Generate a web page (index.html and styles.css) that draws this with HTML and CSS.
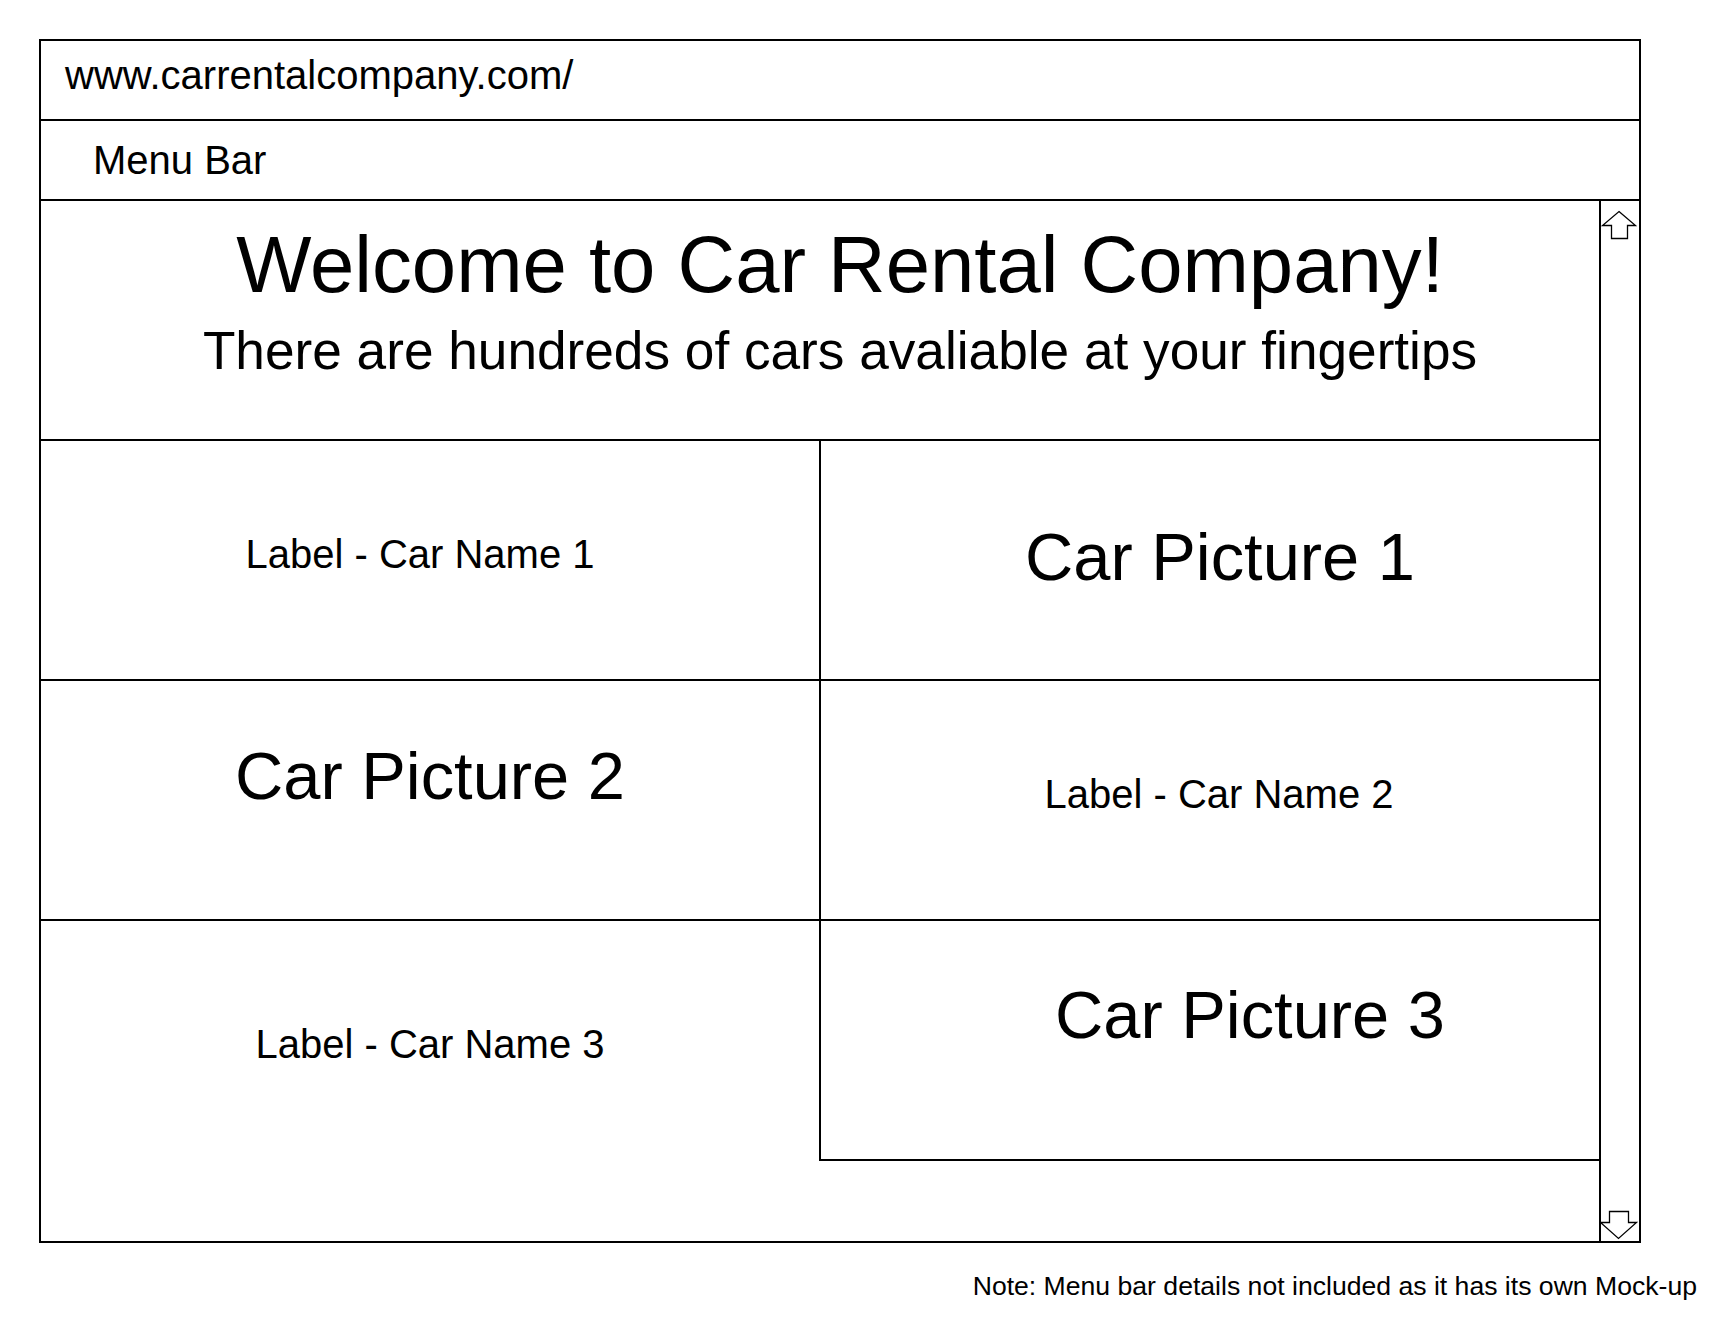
FILE: index.html
```html
<!DOCTYPE html>
<html lang="en">
<head>
<meta charset="utf-8">
<title>Car Rental Company - Mock-up</title>
<link rel="stylesheet" href="styles.css">
</head>
<body>
<div class="frame">
  <div class="urlbar">www.carrentalcompany.com/</div>
  <div class="menubar">Menu Bar</div>
  <div class="viewport">
    <div class="content">
      <div class="hero">
        <h1 class="hero-title">Welcome to Car Rental Company!</h1>
        <p class="hero-sub">There are hundreds of cars avaliable at your fingertips</p>
      </div>
      <div class="grid">
        <div class="cell cell-left"><span class="label label-1">Label - Car Name 1</span></div>
        <div class="cell"><span class="picture picture-1">Car Picture 1</span></div>
        <div class="cell cell-left"><span class="picture picture-2">Car Picture 2</span></div>
        <div class="cell"><span class="label label-2">Label - Car Name 2</span></div>
        <div class="cell cell-left cell-last"><span class="label label-3">Label - Car Name 3</span></div>
        <div class="cell cell-last-right"><span class="picture picture-3">Car Picture 3</span></div>
      </div>
    </div>
    <div class="scrollbar">
      <svg class="arrow arrow-up" width="40" height="40" viewBox="0 0 40 40">
        <polygon points="20,10.5 36.5,24.5 28.5,24.5 28.5,37.5 12.5,37.5 12.5,24.5 3.5,24.5" fill="#fff" stroke="#000" stroke-width="1.3"/>
      </svg>
      <svg class="arrow arrow-down" width="40" height="40" viewBox="0 0 40 40">
        <polygon points="10.5,10.5 29.5,10.5 29.5,21.5 37.5,21.5 19.5,37.5 1.5,21.5 10.5,21.5" fill="#fff" stroke="#000" stroke-width="1.3"/>
      </svg>
    </div>
  </div>
</div>
<div class="note-row">
  <p class="note">Note: Menu bar details not included as it has its own Mock-up</p>
</div>
</body>
</html>
```

FILE: styles.css
```css
html, body {
  margin: 0;
  padding: 0;
  background: #ffffff;
}

body {
  font-family: "Liberation Sans", Arial, sans-serif;
  color: #000000;
  width: 1720px;
}

.frame {
  box-sizing: border-box;
  margin: 39px 0 0 39px;
  width: 1602px;
  height: 1204px;
  border: 2px solid #000;
  display: flex;
  flex-direction: column;
}

.urlbar {
  box-sizing: border-box;
  height: 80px;
  border-bottom: 2px solid #000;
  padding-left: 24px;
  font-size: 40px;
  line-height: 46px;
  padding-top: 11px;
}

.menubar {
  box-sizing: border-box;
  height: 80px;
  border-bottom: 2px solid #000;
  padding-left: 52px;
  font-size: 40px;
  display: flex;
  align-items: center;
}

.viewport {
  flex: 1;
  display: flex;
  min-height: 0;
}

.content {
  flex: 1;
  display: flex;
  flex-direction: column;
}

.hero {
  box-sizing: border-box;
  height: 240px;
  border-bottom: 2px solid #000;
  padding: 18px 0 0 40px;
  text-align: center;
}

.hero-title {
  margin: 0;
  font-weight: normal;
  font-size: 79.7px;
  line-height: 92px;
}

.hero-sub {
  margin: 9px 0 0 0;
  font-size: 53.2px;
  line-height: 61px;
}

.grid {
  flex: 1;
  display: grid;
  grid-template-columns: 780px 1fr;
  grid-template-rows: 240px 240px 240px;
  align-content: start;
}

.cell {
  box-sizing: border-box;
  border-bottom: 2px solid #000;
  display: flex;
  align-items: center;
  justify-content: center;
}

.cell-left {
  border-right: 2px solid #000;
}

.cell-last {
  border-bottom: none;
}

.label {
  font-size: 40px;
}

.picture {
  font-size: 66.8px;
}

.label-1 { margin: 0 20px 12px 0; }
.picture-1 { margin: 0 0 6px 20px; }
.picture-2 { margin: 0 0 48px 0; }
.label-2 { margin: 0 0 12px 18px; }
.label-3 { margin: 6px 0 0 0; }
.picture-3 { margin: 0 0 50px 80px; }

.scrollbar {
  box-sizing: border-box;
  width: 40px;
  border-left: 2px solid #000;
  display: flex;
  flex-direction: column;
  justify-content: space-between;
}

.arrow {
  display: block;
  margin-left: -2px;
}

.note-row {
  display: flex;
  justify-content: flex-end;
  padding-right: 23px;
}

.note {
  margin: 28px 0 0 0;
  font-size: 26.6px;
  line-height: 31px;
}
```
